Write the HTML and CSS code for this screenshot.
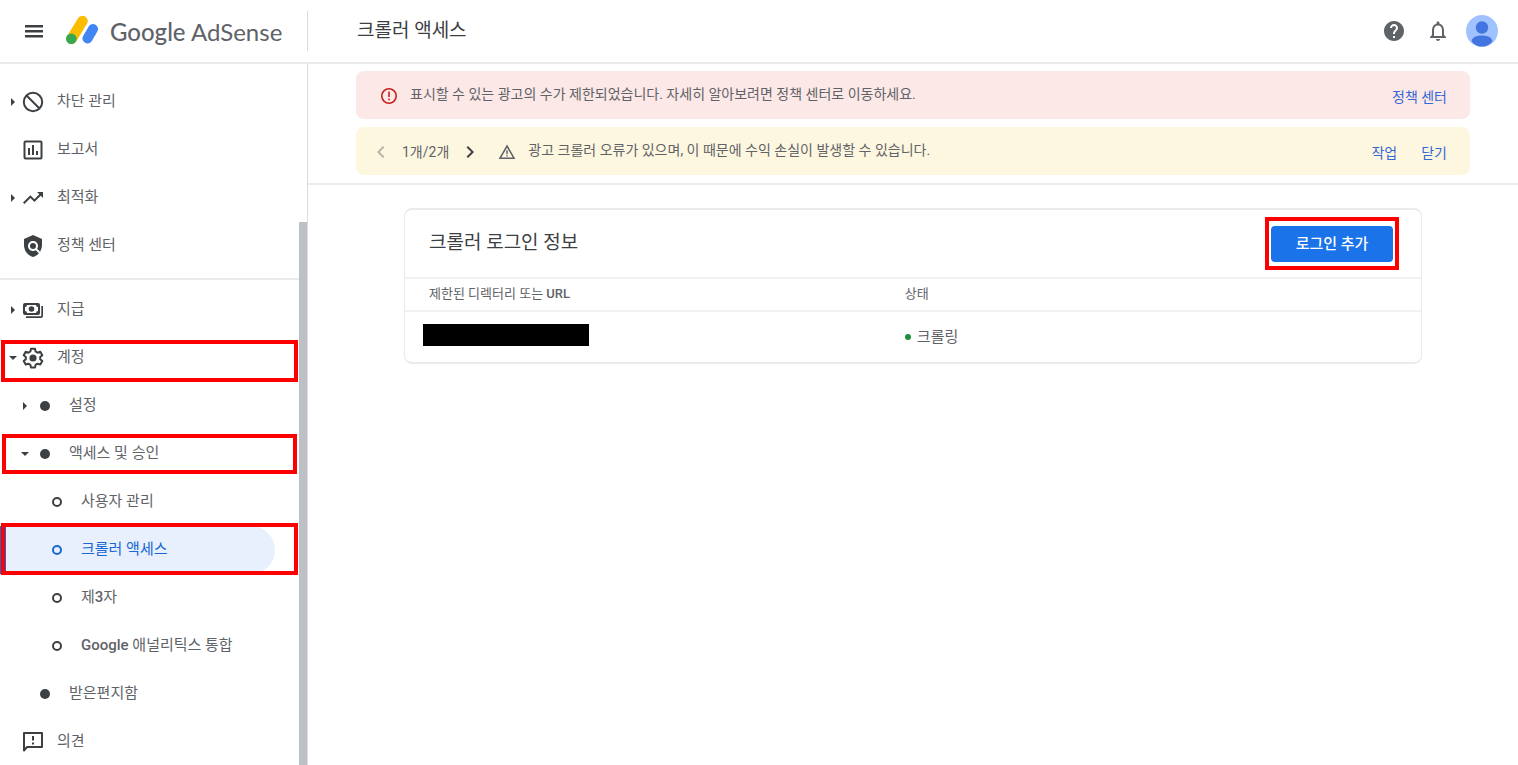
FILE: index.html
```html
<!DOCTYPE html>
<html lang="ko">
<head>
<meta charset="utf-8">
<title>크롤러 액세스 - Google AdSense</title>
<link rel="stylesheet" href="styles.css">
</head>
<body>
<header class="topbar">
  <div class="brand">
    <button class="icon-btn" aria-label="메뉴"><svg class="icon" viewBox="0 0 24 24"><path d="M3 18.500h18v-2.400H3v2.400zm0-5h18v-2.400H3v2.400zm0-7.400v2.400h18V6.100H3z"/></svg></button>
    <a class="logo" href="#">
      <svg class="logo-mark" viewBox="0 0 34 32" fill="none" stroke-linecap="round"><path d="M17.500 6 6.500 24" stroke="#fbbc04" stroke-width="10.500"/><path d="M28 14 22.500 23.500" stroke="#4285f4" stroke-width="10"/><circle cx="6.300" cy="23.800" r="5.300" fill="#34a853"/></svg>
      <span class="logo-text"><span class="logo-google">Google</span> AdSense</span>
    </a>
  </div>
  <h1 class="page-title">크롤러 액세스</h1>
  <div class="tools">
    <button class="icon-btn" aria-label="도움말"><svg class="icon icon-grey" viewBox="0 0 24 24"><path d="M12 2C6.480 2 2 6.480 2 12s4.480 10 10 10 10-4.480 10-10S17.520 2 12 2zm1 17h-2v-2h2v2zm2.070-7.750-.9.920C13.450 12.900 13 13.500 13 15h-2v-.5c0-1.100.45-2.100 1.170-2.830l1.240-1.260c.37-.36.59-.86.59-1.410 0-1.100-.9-2-2-2s-2 .9-2 2H8c0-2.210 1.790-4 4-4s4 1.790 4 4c0 .88-.36 1.680-.93 2.250z"/></svg></button>
    <button class="icon-btn" aria-label="알림"><svg class="icon icon-grey" viewBox="0 0 24 24"><path d="M12 22c1.100 0 2-.9 2-2h-4c0 1.100.9 2 2 2zm6-6v-5c0-3.070-1.630-5.640-4.500-6.320V4c0-.83-.67-1.500-1.500-1.500s-1.500.67-1.500 1.500v.68C7.640 5.360 6 7.920 6 11v5l-2 2v1h16v-1l-2-2zm-2 1H8v-6c0-2.480 1.510-4.500 4-4.500s4 2.020 4 4.500v6z"/></svg></button>
    <button class="icon-btn" aria-label="계정"><svg class="avatar" viewBox="0 0 32 32"><circle cx="16" cy="16" r="16" fill="#a0c3ff"/><circle cx="16" cy="12.500" r="6.200" fill="#4374e0"/><path d="M5.700 26.500c0-4 4.500-6 10.300-6s10.300 2 10.300 6c-2.500 3.300-6.100 5-10.300 5s-7.800-1.700-10.300-5z" fill="#4374e0"/></svg></button>
  </div>
</header>
<div class="layout">
  <aside class="sidebar">
    <nav class="nav">
      <ul class="nav-list">
        <li class="nav-row"><a class="nav-item" href="#"><span class="arrow right"></span><svg class="icon" viewBox="0 0 24 24"><g fill="none" stroke="#3c4043" stroke-width="2"><circle cx="12" cy="12" r="9.200"/><path d="M5.500 5.500l13 13"/></g></svg><span class="label">차단 관리</span></a></li>
        <li class="nav-row"><a class="nav-item" href="#"><span class="arrow"></span><svg class="icon" viewBox="0 0 24 24"><rect x="3.500" y="3.500" width="17" height="17" rx="1" fill="none" stroke="#3c4043" stroke-width="2"/><path d="M7 10h2v7H7zM11 7h2v10h-2zM15 13h2v4h-2z"/></svg><span class="label">보고서</span></a></li>
        <li class="nav-row"><a class="nav-item" href="#"><span class="arrow right"></span><svg class="icon" viewBox="0 0 24 24"><path d="M16 6l2.290 2.290-4.880 4.880-4-4L2 16.590 3.410 18l6-6 4 4 6.300-6.290L22 12V6z"/></svg><span class="label">최적화</span></a></li>
        <li class="nav-row"><a class="nav-item" href="#"><span class="arrow"></span><svg class="icon" viewBox="0 0 24 24"><path d="M21 5l-9-4-9 4v6c0 5.550 3.840 10.740 9 12 2.300-.56 4.330-1.900 5.880-3.710l-3.120-3.120c-1.940 1.290-4.580 1.070-6.290-.64-1.950-1.950-1.950-5.120 0-7.070 1.950-1.950 5.120-1.950 7.070 0 1.710 1.710 1.920 4.350.64 6.290l2.900 2.900C20.290 15.690 21 13.380 21 11V5z"/><circle cx="12" cy="12" r="3"/></svg><span class="label">정책 센터</span></a></li>
      </ul>
      <ul class="nav-list divided">
        <li class="nav-row"><a class="nav-item" href="#"><span class="arrow right"></span><svg class="icon" viewBox="0 0 24 24"><path fill-rule="evenodd" d="M4 5h13a2 2 0 0 1 2 2v8a2 2 0 0 1-2 2H4a2 2 0 0 1-2-2V7a2 2 0 0 1 2-2zm2 2a2 2 0 0 1-2 2v4a2 2 0 0 1 2 2h9a2 2 0 0 1 2-2V9a2 2 0 0 1-2-2z"/><circle cx="10.500" cy="11" r="2.800"/><path d="M20.300 8H22v10a2 2 0 0 1-2 2H5v-1.800h15.300z"/></svg><span class="label">지급</span></a></li>
        <li class="nav-row"><a class="nav-item" href="#"><span class="arrow down"></span><svg class="icon" viewBox="0 0 24 24"><path fill="none" stroke="#3c4043" stroke-width="2" stroke-linejoin="round" d="M10 2.800h4l.6 2.700 2 1.200 2.700-.9 2 3.500-2.100 1.800v2.200l2.100 1.800-2 3.500-2.700-.9-2 1.200-.6 2.600h-4l-.6-2.600-2-1.200-2.700.9-2-3.500 2.100-1.800v-2.200L2.700 9.300l2-3.500 2.700.9 2-1.200z"/><circle cx="12" cy="12" r="3.600"/></svg><span class="label">계정</span></a><span class="mark mark-account"></span></li>
        <li class="nav-row"><a class="nav-item level-2" href="#"><span class="arrow right"></span><span class="bullet"></span><span class="label">설정</span></a></li>
        <li class="nav-row"><a class="nav-item level-2" href="#"><span class="arrow down"></span><span class="bullet"></span><span class="label">액세스 및 승인</span></a><span class="mark mark-access"></span></li>
        <li class="nav-row"><a class="nav-item level-3" href="#"><span class="arrow"></span><span class="bullet ring"></span><span class="label">사용자 관리</span></a></li>
        <li class="nav-row"><a class="nav-item level-3 active" href="#" aria-current="page"><span class="arrow"></span><span class="bullet ring"></span><span class="label">크롤러 액세스</span></a><span class="mark mark-crawler"></span></li>
        <li class="nav-row"><a class="nav-item level-3" href="#"><span class="arrow"></span><span class="bullet ring"></span><span class="label">제<b class="latin">3</b>자</span></a></li>
        <li class="nav-row"><a class="nav-item level-3" href="#"><span class="arrow"></span><span class="bullet ring"></span><span class="label"><b class="latin">Google</b> 애널리틱스 통합</span></a></li>
        <li class="nav-row"><a class="nav-item level-2" href="#"><span class="arrow"></span><span class="bullet"></span><span class="label">받은편지함</span></a></li>
        <li class="nav-row"><a class="nav-item" href="#"><span class="arrow"></span><svg class="icon" viewBox="0 0 24 24"><path fill="none" stroke="#3c4043" stroke-width="2" stroke-linejoin="round" d="M3 3h18v14H6l-3 3.500z"/><path d="M11 6h2v4.500h-2zM11 12.500h2v2h-2z"/></svg><span class="label">의견</span></a></li>
      </ul>
    </nav>
    <div class="scrollbar"></div>
  </aside>
  <main class="main">
    <section class="alerts">
      <div class="alert alert-error">
        <svg class="alert-icon" viewBox="0 0 20 20"><circle cx="10" cy="10" r="7.200" fill="none" stroke="#c5221f" stroke-width="1.600"/><path fill="#c5221f" d="M9.200 5.500h1.600v5.500H9.200zM9.200 12.500h1.600v1.700H9.200z"/></svg>
        <p class="alert-text">표시할 수 있는 광고의 수가 제한되었습니다. 자세히 알아보려면 정책 센터로 이동하세요.</p>
        <div class="alert-actions"><a class="action" href="#">정책 센터</a></div>
      </div>
      <div class="alert alert-warning">
        <div class="pager">
          <button class="icon-btn" aria-label="이전" disabled><svg class="icon icon-off" viewBox="0 0 24 24"><path d="M15.400 7.400 14 6l-6 6 6 6 1.400-1.400L10.800 12z"/></svg></button>
          <span class="pager-text">1개/2개</span>
          <button class="icon-btn" aria-label="다음"><svg class="icon" viewBox="0 0 24 24"><path d="M8.600 7.400 10 6l6 6-6 6-1.400-1.400L13.200 12z"/></svg></button>
        </div>
        <svg class="alert-icon" viewBox="0 0 20 20"><path fill="none" stroke="#5f6368" stroke-width="1.600" d="M10 4 17 16.200H3z"/><path fill="#5f6368" d="M9.300 8.300h1.400v4H9.300zM9.300 13.200h1.400v1.400H9.300z"/></svg>
        <p class="alert-text">광고 크롤러 오류가 있으며, 이 때문에 수익 손실이 발생할 수 있습니다.</p>
        <div class="alert-actions"><button class="action">작업</button><button class="action">닫기</button></div>
      </div>
    </section>
    <section class="card">
      <div class="card-head">
        <h2 class="card-title">크롤러 로그인 정보</h2>
        <div class="add"><button class="primary">로그인 추가</button><span class="mark mark-add"></span></div>
      </div>
      <table class="table">
        <thead><tr><th class="col-url">제한된 디렉터리 또는 <b class="latin">URL</b></th><th class="col-state">상태</th></tr></thead>
        <tbody><tr><td class="cell-url"><div class="redacted"></div></td><td class="col-state"><span class="status">크롤링</span></td></tr></tbody>
      </table>
    </section>
  </main>
</div>
</body>
</html>
```
FILE: styles.css
```css
* { box-sizing: border-box; }
body {
  margin: 0;
  height: 100vh;
  display: flex;
  flex-direction: column;
  overflow: hidden;
  background: #fff;
  color: #5f6368;
  font: 14px/20px Roboto, "Noto Sans CJK KR", sans-serif;
}
h1, h2, p, ul { margin: 0; padding: 0; font-weight: 400; }
ul { list-style: none; }
a { text-decoration: none; color: inherit; }
button { border: 0; padding: 0; background: none; font: inherit; color: inherit; }
.icon { display: block; flex: none; width: 24px; height: 24px; fill: #3c4043; }
.icon-grey { fill: #5f6368; }
.icon-off { fill: #b9b5a6; }
.icon-btn { display: block; flex: none; }

.topbar {
  display: flex;
  align-items: center;
  flex: none;
  height: 64px;
  border-bottom: 2px solid #ebebeb;
}
.brand {
  display: flex;
  align-items: center;
  gap: 19px;
  width: 308px;
  height: 40px;
  padding-left: 22px;
  border-right: 1px solid #dadce0;
}
.logo { display: flex; align-items: center; gap: 11px; }
.logo-mark { flex: none; width: 34px; height: 32px; }
.logo-text { font: 24px/32px Lato, sans-serif; white-space: nowrap; padding-top: 2px; }
.logo-google { font-weight: 500; }
.page-title { flex: 1; padding-left: 49px; font-size: 19px; line-height: 28px; color: #3c4043; }
.tools { display: flex; align-items: center; gap: 20px; padding-right: 20px; }
.tools .icon-btn:last-child { margin-left: -4px; }
.avatar { display: block; width: 32px; height: 32px; }

.layout { display: flex; flex: 1; min-height: 0; }
.sidebar { display: flex; flex: none; width: 308px; border-right: 1px solid #dadce0; overflow: hidden; }
.nav { flex: 1; padding-top: 14px; }
.divided { margin-top: 8px; padding-top: 6px; border-top: 2px solid #ebebeb; }
.nav-row { position: relative; }
.nav-item {
  display: flex;
  align-items: center;
  height: 48px;
  margin-right: 24px;
  padding-left: 7px;
  font-size: 15px;
  color: #5f6368;
}
.level-2 { padding-left: 19px; }
.level-3 { padding-left: 31px; }
.arrow { display: flex; justify-content: center; flex: none; width: 12px; margin-right: 2px; }
.arrow::before { border: 0 solid transparent; }
.right::before { content: ""; border-width: 4px 0 4px 4px; border-left-color: #3c4043; }
.down::before { content: ""; border-width: 4px 4px 0; border-top-color: #3c4043; }
.label { padding: 0 0 2px 12px; white-space: nowrap; }
.bullet { flex: none; width: 10px; height: 10px; margin: 0 7px; border-radius: 50%; background: #3c4043; }
.ring { background: none; border: 2px solid #3c4043; }
.active {
  padding-left: 25px;
  border-left: 6px solid #1967d2;
  border-radius: 0 24px 24px 0;
  background: #e8f0fe;
  color: #1967d2;
}
.active .ring { border-color: #1967d2; }
.scrollbar { width: 8px; margin-top: 158px; background: #bdc1c6; }

.mark { position: absolute; border: 4px solid #f00; pointer-events: none; }
.mark-account { inset: 6px 1px 0 1px; }
.mark-access { inset: 4px 2px 4px 2px; }
.mark-crawler { inset: -3px 1px -1px 1px; }
.mark-add { inset: -9px -6px -8px -6px; }

.main { flex: 1; min-width: 0; }
.alerts {
  display: grid;
  gap: 8px;
  padding: 7px 48px 8px;
  border-bottom: 2px solid #ebebeb;
}
.alert {
  display: flex;
  align-items: center;
  min-height: 48px;
  padding-top: 2px;
  padding-right: 23px;
  border-radius: 8px;
}
.alert-error { padding-left: 23px; background: #fce8e6; }
.alert-warning { padding-left: 13px; background: #fef7e0; }
.alert-icon { flex: none; width: 20px; height: 20px; }
.alert-text { flex: 1; padding: 0 0 4px 11px; }
.alert-actions { display: flex; gap: 24px; padding-top: 2px; }
.action { color: #3367d6; }
.pager { display: flex; align-items: center; gap: 9px; padding-right: 15px; }

.card {
  margin: 23px 96px;
  border: 2px solid #ebebeb;
  border-width: 2px 1px;
  border-radius: 8px;
}
.card-head {
  display: flex;
  align-items: center;
  justify-content: space-between;
  height: 67px;
  padding: 0 28px 0 24px;
}
.card-title { padding-bottom: 2px; font-size: 19px; line-height: 28px; color: #3c4043; }
.add { position: relative; }
.primary {
  display: block;
  min-width: 122px;
  padding: 8px 24px;
  border-radius: 4px;
  background: #1a73e8;
  color: #fff;
  font-size: 15px;
  font-weight: 500;
}
.table { width: 100%; border-collapse: separate; border-spacing: 0; table-layout: fixed; }
.table th, .table td { border-top: 2px solid #f1f1f1; padding: 0; text-align: left; }
.table th { height: 33px; padding-bottom: 2px; font-size: 13px; font-weight: 400; }
.table .col-url { width: 49%; padding-left: 24px; }
.table .col-state { padding-left: 2px; }
.latin { font-weight: 500; }
.table td { height: 52px; font-size: 15px; }
.table .cell-url { padding-left: 18px; padding-bottom: 4px; }
.redacted { width: 166px; height: 22px; background: #000; }
.status { display: flex; align-items: center; gap: 6px; }
.status::before { content: ""; width: 6px; height: 6px; border-radius: 50%; background: #1e8e3e; }
```
